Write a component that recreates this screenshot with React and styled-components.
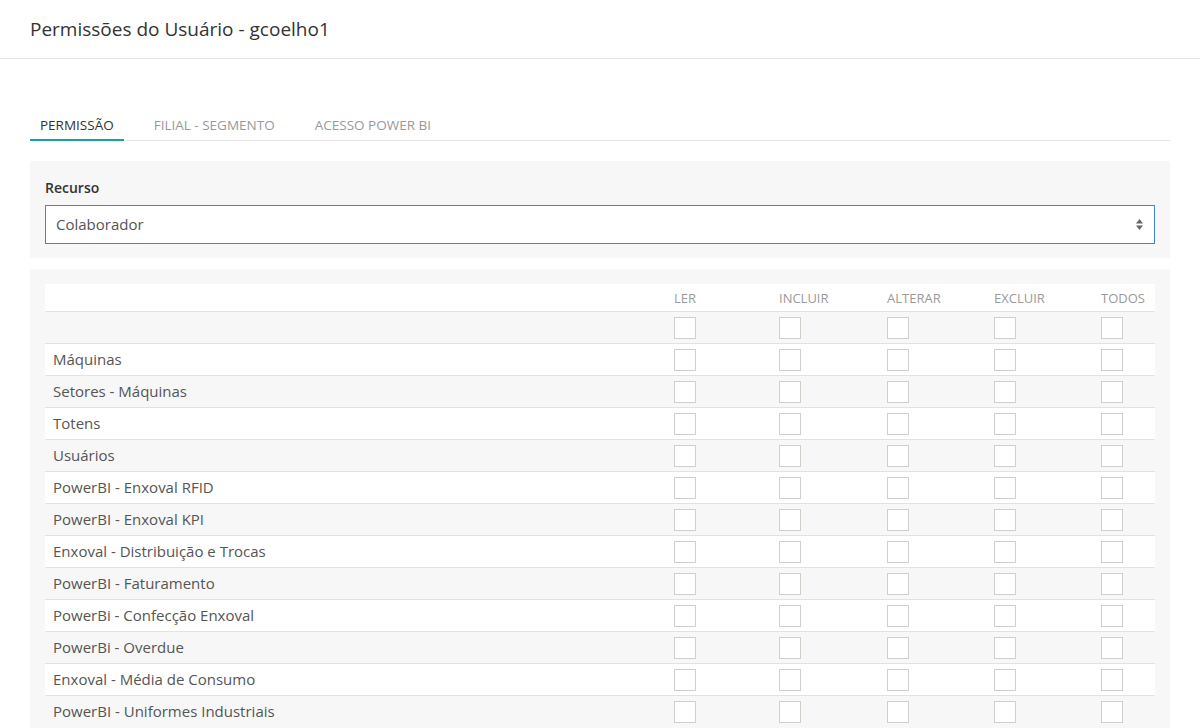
import React, { useState } from "react";
import styled, { createGlobalStyle } from "styled-components";

// --- Global ---
const GlobalStyle = createGlobalStyle`
  body {
    margin: 0;
    background-color: #ffffff;
    font-family: "Open Sans", "Noto Sans", Arial, sans-serif;
    color: #333333;
  }
`;

// #1 cabeçalho
const Header = styled.header`
  height: 58px;
  border-bottom: 1px solid #e5e5e5;
  display: flex;
  align-items: center;
  padding: 0 30px;

  h1 {
    margin: 0;
    font-size: 19px;
    font-weight: 400;
    color: #333333;
  }
`;

const Content = styled.main`
  padding: 0 30px;
`;

// #2 abas
const TabList = styled.nav`
  margin-top: 46px;
  display: flex;
  gap: 20px;
  border-bottom: 1px solid #e5e5e5;
`;

const Tab = styled.button`
  background: none;
  border: none;
  border-bottom: 2px solid ${({ $active }) => ($active ? "#17a2a8" : "transparent")};
  margin-bottom: -1px;
  padding: 10px 10px 4px;
  font-family: inherit;
  font-size: 13.5px;
  line-height: 20px;
  text-transform: uppercase;
  color: ${({ $active }) => ($active ? "#333333" : "#999999")};
  cursor: pointer;
`;

// #3 painel cinza
const Panel = styled.section`
  background-color: #f7f7f7;
  padding: ${({ $pad }) => $pad || "15px"};
  margin-top: ${({ $top }) => $top || "0"};
`;

const Label = styled.label`
  display: block;
  font-size: 14px;
  font-weight: 600;
  line-height: 20px;
  color: #333333;
  margin-bottom: 7px;
`;

const SelectBox = styled.div`
  height: 37px;
  border: 1px solid #3c87e0;
  background-color: #ffffff;
  display: flex;
  align-items: center;
  justify-content: space-between;
  padding: 0 10px;
  font-size: 15px;
  color: #555555;
  cursor: pointer;

  span {
    padding-bottom: 2px;
  }

  svg {
    margin-right: 1px;
  }
`;

// #4 tabela de permissões
const Table = styled.div`
  display: flex;
  flex-direction: column;
`;

const Row = styled.div`
  display: grid;
  grid-template-columns: 621px 105px 108px 107px 107px 62px;
  align-items: center;
  height: ${({ $head }) => ($head ? "27px" : "31px")};
  border-top: ${({ $head }) => ($head ? "none" : "1px solid #e2e2e2")};
  background-color: ${({ $striped }) => ($striped ? "transparent" : "#ffffff")};
`;

const Cell = styled.div`
  padding-left: 8px;
  padding-bottom: ${({ $text }) => ($text ? "2px" : "0")};
  font-size: ${({ $head }) => ($head ? "13px" : "15px")};
  color: ${({ $head }) => ($head ? "#9a9a9a" : "#555555")};
  text-transform: ${({ $head }) => ($head ? "uppercase" : "none")};
  white-space: nowrap;
  display: flex;
  align-items: center;
`;

const Check = styled.span`
  width: 20px;
  height: 20px;
  border: 1px solid #d0d0ca;
  background-color: ${({ $on }) => ($on ? "#17a2a8" : "#ffffff")};
  display: inline-block;
  cursor: pointer;
`;

const columns = ["Ler", "Incluir", "Alterar", "Excluir", "Todos"];

const recursos = [
  "",
  "Máquinas",
  "Setores - Máquinas",
  "Totens",
  "Usuários",
  "PowerBI - Enxoval RFID",
  "PowerBI - Enxoval KPI",
  "Enxoval - Distribuição e Trocas",
  "PowerBI - Faturamento",
  "PowerBi - Confecção Enxoval",
  "PowerBi - Overdue",
  "Enxoval - Média de Consumo",
  "PowerBI - Uniformes Industriais",
];

const tabs = ["Permissão", "Filial - Segmento", "Acesso Power BI"];

const SortIcon = () => (
  <svg width="7" height="11" viewBox="0 0 7 11">
    <path d="M3.5 0 L7 4.5 H0 Z" fill="#666" />
    <path d="M3.5 11 L7 6.5 H0 Z" fill="#666" />
  </svg>
);

const App = () => {
  const [activeTab, setActiveTab] = useState(0);
  const [checked, setChecked] = useState({});

  const toggle = (key) => {
    setChecked((prev) => ({ ...prev, [key]: !prev[key] }));
  };

  return (
    <>
      <GlobalStyle />
      <Header>
        <h1>Permissões do Usuário - gcoelho1</h1>
      </Header>
      <Content>
        <TabList>
          {tabs.map((t, i) => (
            <Tab key={t} $active={i === activeTab} onClick={() => setActiveTab(i)}>
              {t}
            </Tab>
          ))}
        </TabList>

        <Panel $top="20px" $pad="17px 15px 14px">
          <Label>Recurso</Label>
          <SelectBox>
            <span>Colaborador</span>
            <SortIcon />
          </SelectBox>
        </Panel>

        <Panel $top="11px">
          <Table>
            <Row $head>
              <Cell $head />
              {columns.map((c) => (
                <Cell $head key={c}>
                  {c}
                </Cell>
              ))}
            </Row>
            {recursos.map((r, i) => (
              <Row key={i} $striped={i % 2 === 0}>
                <Cell $text>{r}</Cell>
                {columns.map((c) => (
                  <Cell key={c}>
                    <Check
                      $on={checked[`${i}-${c}`]}
                      onClick={() => toggle(`${i}-${c}`)}
                    />
                  </Cell>
                ))}
              </Row>
            ))}
          </Table>
        </Panel>
      </Content>
    </>
  );
};

export default App;
